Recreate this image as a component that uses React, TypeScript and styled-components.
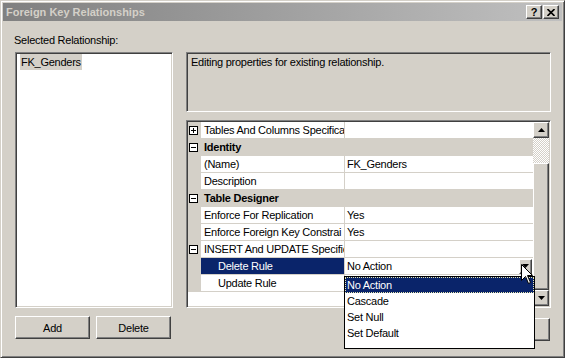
import styled, { createGlobalStyle } from 'styled-components';

const face = '#d4d0c8';
const navy = '#0a246a';

const GlobalStyle = createGlobalStyle`
  html, body {
    margin: 0;
    width: 565px;
    height: 360px;
    overflow: hidden;
    background: #ffffff;
    font-family: 'Liberation Sans', Arial, sans-serif;
    font-size: 11px;
    letter-spacing: -0.25px;
    color: #000;
  }
  * { box-sizing: border-box; }
`;

const raised = `
  border: 1px solid;
  border-color: #ffffff #404040 #404040 #ffffff;
  box-shadow: inset -1px -1px #808080, inset 1px 1px ${face};
`;

const sunken = `
  border: 1px solid;
  border-color: #808080 #ffffff #ffffff #808080;
  box-shadow: inset 1px 1px #404040, inset -1px -1px ${face};
`;

const Window = styled.div`
  position: relative;
  display: flex;
  flex-direction: column;
  width: 565px;
  height: 358px;
  padding: 2px;
  background: ${face};
  border: 1px solid;
  border-color: ${face} #404040 #404040 ${face};
  box-shadow: inset 1px 1px #ffffff, inset -1px -1px #808080;
`;

const TitleBar = styled.div`
  display: flex;
  align-items: center;
  justify-content: space-between;
  height: 18px;
  padding: 0 3px 0 3px;
  background: linear-gradient(to right, #808080, #c0c0c0);
`;

const Title = styled.span`
  color: ${face};
  font-weight: bold;
  font-size: 11px;
  letter-spacing: 0;
`;

const TitleButtons = styled.div`
  display: flex;
  gap: 1px;
`;

const TitleButton = styled.div`
  display: flex;
  align-items: center;
  justify-content: center;
  width: 16px;
  height: 14px;
  background: ${face};
  font-weight: bold;
  font-size: 11px;
  line-height: 1;
  ${raised}
`;

const Body = styled.div`
  display: flex;
  gap: 13px;
  padding: 13px 11px 0 12px;
`;

const LeftColumn = styled.div`
  display: flex;
  flex-direction: column;
  width: 158px;
`;

const RightColumn = styled.div`
  display: flex;
  flex-direction: column;
  flex: 1;
`;

const Label = styled.div`
  height: 13px;
  line-height: 13px;
  margin-left: -1px;
`;

const ListBox = styled.div`
  height: 256px;
  margin-top: 5px;
  padding: 1px 4px;
  background: #ffffff;
  ${sunken}
`;

const ListItem = styled.div<{ $selected?: boolean }>`
  display: inline-block;
  height: 16px;
  line-height: 16px;
  padding: 0 1px;
  background: ${({ $selected }) => ($selected ? face : 'transparent')};
`;

const ButtonRow = styled.div<{ $right?: boolean }>`
  display: flex;
  gap: 6px;
  justify-content: ${({ $right }) => ($right ? 'flex-end' : 'flex-start')};
  margin-top: ${({ $right }) => ($right ? '10px' : '8px')};
  padding-right: ${({ $right }) => ($right ? '1px' : '0')};
`;

const Button = styled.div`
  display: flex;
  align-items: center;
  justify-content: center;
  width: 75px;
  height: 23px;
  background: ${face};
  ${raised}
`;

const DescBox = styled.div`
  height: 60px;
  margin-top: 18px;
  padding: 3px 4px;
  line-height: 13px;
  ${sunken}
`;

const Grid = styled.div`
  position: relative;
  display: flex;
  height: 188px;
  margin-top: 8px;
  padding: 1px;
  background: #ffffff;
  ${sunken}
`;

const Rows = styled.div`
  flex: 1;
  display: flex;
  flex-direction: column;
`;

const Row = styled.div<{ $category?: boolean }>`
  display: grid;
  grid-template-columns: 13px 144px 1fr;
  height: 17px;
  background: ${({ $category }) => ($category ? face : '#ffffff')};
  font-weight: ${({ $category }) => ($category ? 'bold' : 'normal')};
`;

const Gutter = styled.div`
  display: flex;
  align-items: center;
  padding-left: 1px;
  background: ${face};
`;

const NameCell = styled.div<{ $indent?: boolean; $selected?: boolean; $category?: boolean }>`
  padding-left: ${({ $indent }) => ($indent ? '17px' : '3px')};
  line-height: 16px;
  white-space: nowrap;
  overflow: hidden;
  background: ${({ $selected }) => ($selected ? navy : 'transparent')};
  color: ${({ $selected }) => ($selected ? '#ffffff' : '#000')};
  border-bottom: 1px solid ${face};
  border-right: ${({ $category }) => ($category ? 'none' : `1px solid ${face}`)};
`;

const ValueCell = styled.div`
  display: flex;
  align-items: center;
  justify-content: space-between;
  padding-left: 2px;
  line-height: 16px;
  white-space: nowrap;
  overflow: hidden;
  border-bottom: 1px solid ${face};
`;

const Expander = styled.div`
  display: flex;
  align-items: center;
  justify-content: center;
  width: 9px;
  height: 9px;
  background: #ffffff;
  border: 1px solid #000;
`;

const ComboButton = styled.div`
  display: flex;
  align-items: center;
  justify-content: center;
  width: 13px;
  height: 15px;
  margin-right: 1px;
  background: ${face};
  ${raised}
`;

const Scrollbar = styled.div`
  display: flex;
  flex-direction: column;
  width: 16px;
`;

const ScrollArrow = styled.div`
  display: flex;
  align-items: center;
  justify-content: center;
  height: 16px;
  background: ${face};
  ${raised}
`;

const ScrollTrack = styled.div`
  height: 25px;
  background: repeating-conic-gradient(#ffffff 0 25%, ${face} 0 50%) 0 0 / 2px 2px;
`;

const ScrollThumb = styled.div`
  flex: 1;
  background: ${face};
  ${raised}
`;

const DropList = styled.div`
  position: absolute;
  left: 157px;
  top: 155px;
  z-index: 10;
  width: 191px;
  height: 73px;
  background: #ffffff;
  border: 1px solid #000;
`;

const DropItem = styled.div<{ $selected?: boolean }>`
  height: 16px;
  line-height: 16px;
  padding-left: 2px;
  background: ${({ $selected }) => ($selected ? navy : 'transparent')};
  color: ${({ $selected }) => ($selected ? '#ffffff' : '#000')};
  outline: ${({ $selected }) => ($selected ? '1px dotted #e8e8b0' : 'none')};
  outline-offset: -1px;
`;

const Cursor = styled.svg`
  position: absolute;
  left: 334px;
  top: 143px;
  z-index: 20;
`;

const Plus = ({ minus }: { minus?: boolean }) => (
  <svg width="7" height="7" viewBox="0 0 7 7">
    <rect x="1" y="3" width="5" height="1" fill="#000" />
    {!minus && <rect x="3" y="1" width="1" height="5" fill="#000" />}
  </svg>
);

const Arrow = ({ up }: { up?: boolean }) => (
  <svg width="7" height="4" viewBox="0 0 7 4">
    <path d={up ? 'M3.5 0 L7 4 L0 4 Z' : 'M0 0 L7 0 L3.5 4 Z'} fill="#000" />
  </svg>
);

type Prop = {
  name: string;
  value?: string;
  kind?: 'category' | 'expand' | 'collapse' | 'child';
  selected?: boolean;
  combo?: boolean;
};

const props: Prop[] = [
  { name: 'Tables And Columns Specifica', kind: 'expand' },
  { name: 'Identity', kind: 'category' },
  { name: '(Name)', value: 'FK_Genders' },
  { name: 'Description' },
  { name: 'Table Designer', kind: 'category' },
  { name: 'Enforce For Replication', value: 'Yes' },
  { name: 'Enforce Foreign Key Constrai', value: 'Yes' },
  { name: 'INSERT And UPDATE Specific', kind: 'collapse' },
  { name: 'Delete Rule', value: 'No Action', kind: 'child', selected: true, combo: true },
  { name: 'Update Rule', kind: 'child' },
];

const options = ['No Action', 'Cascade', 'Set Null', 'Set Default'];

const App = () => {
  return (
    <>
      <GlobalStyle />
      <Window>
        <TitleBar>
          <Title>Foreign Key Relationships</Title>
          <TitleButtons>
            <TitleButton>?</TitleButton>
            <TitleButton>
              <svg width="8" height="7" viewBox="0 0 8 7">
                <path d="M0.5 0 L7.5 7 M7.5 0 L0.5 7" stroke="#000" strokeWidth="1.6" />
              </svg>
            </TitleButton>
          </TitleButtons>
        </TitleBar>
        <Body>
          <LeftColumn>
            <Label>Selected Relationship:</Label>
            <ListBox>
              <ListItem $selected>FK_Genders</ListItem>
            </ListBox>
            <ButtonRow>
              <Button>Add</Button>
              <Button>Delete</Button>
            </ButtonRow>
          </LeftColumn>
          <RightColumn>
            <DescBox>Editing properties for existing relationship.</DescBox>
            <Grid>
              <Rows>
                {props.map((p) => {
                  const category = p.kind === 'category';
                  const hasIcon = p.kind && p.kind !== 'child';
                  return (
                    <Row key={p.name} $category={category}>
                      <Gutter>
                        {hasIcon && (
                          <Expander>
                            <Plus minus={p.kind !== 'expand'} />
                          </Expander>
                        )}
                      </Gutter>
                      <NameCell
                        $indent={p.kind === 'child'}
                        $selected={p.selected}
                        $category={category}
                      >
                        {p.name}
                      </NameCell>
                      <ValueCell>
                        <span>{p.value}</span>
                        {p.combo && (
                          <ComboButton>
                            <Arrow />
                          </ComboButton>
                        )}
                      </ValueCell>
                    </Row>
                  );
                })}
              </Rows>
              <Scrollbar>
                <ScrollArrow>
                  <Arrow up />
                </ScrollArrow>
                <ScrollTrack />
                <ScrollThumb />
                <ScrollArrow>
                  <Arrow />
                </ScrollArrow>
              </Scrollbar>
              <DropList>
                {options.map((o, i) => (
                  <DropItem key={o} $selected={i === 0}>
                    {o}
                  </DropItem>
                ))}
              </DropList>
              <Cursor width="13" height="21" viewBox="0 0 13 21">
                <path
                  d="M0.5 0.5 L0.5 16.5 L4.5 12.5 L7.5 19.5 L9.5 18.5 L6.5 11.5 L11.5 11.5 Z"
                  fill="#ffffff"
                  stroke="#000"
                  strokeWidth="1"
                />
              </Cursor>
            </Grid>
            <ButtonRow $right>
              <Button>Close</Button>
            </ButtonRow>
          </RightColumn>
        </Body>
      </Window>
    </>
  );
};

export default App;
